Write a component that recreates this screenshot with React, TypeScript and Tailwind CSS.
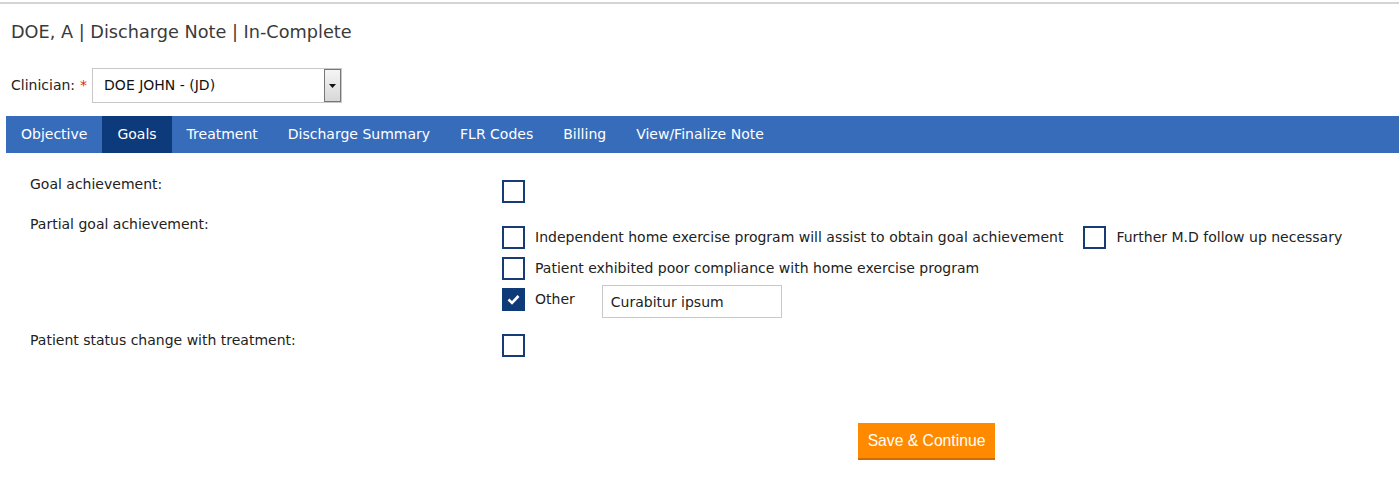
import { useState } from "react"

const tabs = ["Objective", "Goals", "Treatment", "Discharge Summary", "FLR Codes", "Billing", "View/Finalize Note"]

function Box({ checked }: { checked?: boolean }) {
    if (checked) {
        return (
            <span className="block w-[23px] h-[23px] shrink-0 bg-[#0f3a78] flex items-center justify-center">
                <svg width="13" height="11" viewBox="0 0 13 11">
                    <path d="M1.5 5.5 L5 9 L11.5 2" stroke="white" strokeWidth="2.6" fill="none" />
                </svg>
            </span>
        )
    }
    return <span className="block w-[23px] h-[23px] shrink-0 border-2 border-[#173b75] bg-white" />
}

function Check({ label, checked }: { label: string; checked?: boolean }) {
    return (
        <div className="flex items-center gap-[10px]">
            <Box checked={checked} />
            <span className="text-[14px] text-[#222]">{label}</span>
        </div>
    )
}

export default function App() {
    const [other, setOther] = useState("Curabitur ipsum")

    return (
        <div className="bg-white w-[1399px] h-[493px] overflow-hidden font-['DejaVu_Sans',Verdana,sans-serif] text-[#222]">
            <div className="h-[2px] mt-[2px] bg-[#d4d4d4]" />
            <div className="pl-[11px] pt-[16px] text-[17.7px] text-[#3a3a3a] leading-[24px]">
                DOE, A | Discharge Note | In-Complete
            </div>
            <div className="flex items-center pl-[11px] mt-[24px] h-[35px]">
                <span className="text-[14px]">Clinician:</span>
                <span className="text-[#e02020] text-[14px] ml-[5px]">*</span>
                <div className="ml-[5px] w-[250px] h-[35px] border border-[#c8c8c8] flex items-center justify-between">
                    <span className="text-[14px] pl-[11px] text-[#111]">DOE JOHN - (JD)</span>
                    <span className="w-[17px] h-[33px] border border-[#777] bg-gradient-to-b from-[#f5f5f5] to-[#d8d8d8] flex items-center justify-center">
                        <svg width="7" height="4" viewBox="0 0 7 4"><path d="M0 0 H7 L3.5 4 Z" fill="#111" /></svg>
                    </span>
                </div>
            </div>
            <div className="ml-[6px] mt-[13px] h-[37px] bg-[#376cbb] flex text-[14px] text-white">
                {tabs.map(t => (
                    <div key={t} className={`px-[15px] flex items-center ${t === "Goals" ? "bg-[#0c3a7b]" : ""}`}>{t}</div>
                ))}
            </div>
            <div className="pl-[30px] mt-[23px] grid grid-cols-[472px_1fr] text-[14px] leading-[17px]">
                <div className="h-[40px]">Goal achievement:</div>
                <div className="pt-[4px]"><Box /></div>

                <div className="h-[116px]">Partial goal achievement:</div>
                <div className="flex flex-col gap-[8px] pt-[10px]">
                    <div className="flex items-center">
                        <Check label="Independent home exercise program will assist to obtain goal achievement" />
                        <div className="ml-[20px]"><Check label="Further M.D follow up necessary" /></div>
                    </div>
                    <Check label="Patient exhibited poor compliance with home exercise program" />
                    <div className="flex items-start -mt-[3px]">
                        <div className="pt-[3px]"><Check label="Other" checked /></div>
                        <input
                            value={other}
                            onChange={e => setOther(e.target.value)}
                            className="ml-[27px] w-[180px] h-[33px] border border-[#c8c8c8] px-[8px] text-[14px] outline-none"
                        />
                    </div>
                </div>

                <div>Patient status change with treatment:</div>
                <div className="pt-[2px]"><Box /></div>
            </div>
            <div className="mt-[66px] pl-[858px]">
                <button className="bg-[#ff8a00] text-white font-['Liberation_Sans',Arial,sans-serif] text-[15.7px] w-[137px] h-[37px] border-b-2 border-[#d06d00]">
                    Save &amp; Continue
                </button>
            </div>
        </div>
    )
}
